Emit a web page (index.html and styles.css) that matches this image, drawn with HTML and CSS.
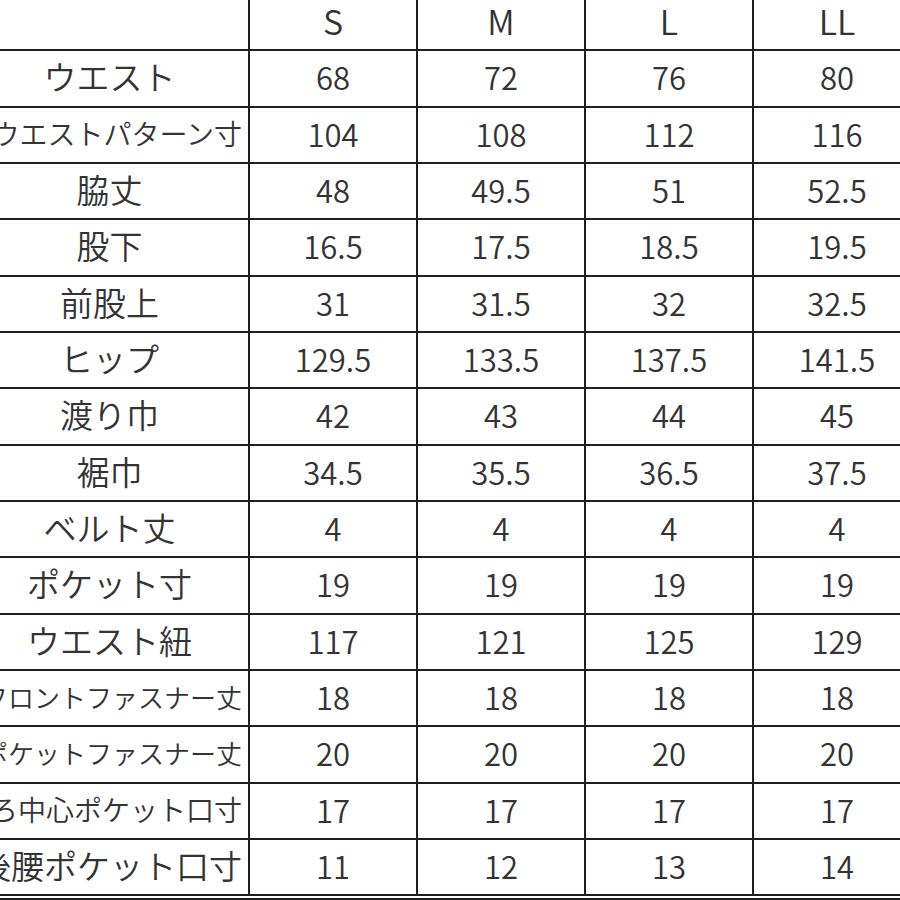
FILE: index.html
```html
<!DOCTYPE html>
<html lang="ja">
<head>
<meta charset="utf-8">
<title>サイズ表</title>
<link rel="stylesheet" href="styles.css">
</head>
<body>
<div class="sheet">
  <div class="grid">
    <div class="cell head"></div>
    <div class="cell head">S</div>
    <div class="cell head">M</div>
    <div class="cell head">L</div>
    <div class="cell head">LL</div>

    <div class="cell label">ウエスト</div>
    <div class="cell num">68</div><div class="cell num">72</div><div class="cell num">76</div><div class="cell num">80</div>

    <div class="cell label fit f28">ウエストパターン寸</div>
    <div class="cell num">104</div><div class="cell num">108</div><div class="cell num">112</div><div class="cell num">116</div>

    <div class="cell label">脇丈</div>
    <div class="cell num">48</div><div class="cell num">49.5</div><div class="cell num">51</div><div class="cell num">52.5</div>

    <div class="cell label">股下</div>
    <div class="cell num">16.5</div><div class="cell num">17.5</div><div class="cell num">18.5</div><div class="cell num">19.5</div>

    <div class="cell label">前股上</div>
    <div class="cell num">31</div><div class="cell num">31.5</div><div class="cell num">32</div><div class="cell num">32.5</div>

    <div class="cell label">ヒップ</div>
    <div class="cell num">129.5</div><div class="cell num">133.5</div><div class="cell num">137.5</div><div class="cell num">141.5</div>

    <div class="cell label">渡り巾</div>
    <div class="cell num">42</div><div class="cell num">43</div><div class="cell num">44</div><div class="cell num">45</div>

    <div class="cell label">裾巾</div>
    <div class="cell num">34.5</div><div class="cell num">35.5</div><div class="cell num">36.5</div><div class="cell num">37.5</div>

    <div class="cell label">ベルト丈</div>
    <div class="cell num">4</div><div class="cell num">4</div><div class="cell num">4</div><div class="cell num">4</div>

    <div class="cell label">ポケット寸</div>
    <div class="cell num">19</div><div class="cell num">19</div><div class="cell num">19</div><div class="cell num">19</div>

    <div class="cell label">ウエスト紐</div>
    <div class="cell num">117</div><div class="cell num">121</div><div class="cell num">125</div><div class="cell num">129</div>

    <div class="cell label fit f26">フロントファスナー丈</div>
    <div class="cell num">18</div><div class="cell num">18</div><div class="cell num">18</div><div class="cell num">18</div>

    <div class="cell label fit f26">ポケットファスナー丈</div>
    <div class="cell num">20</div><div class="cell num">20</div><div class="cell num">20</div><div class="cell num">20</div>

    <div class="cell label fit f28">後ろ中心ポケット口寸</div>
    <div class="cell num">17</div><div class="cell num">17</div><div class="cell num">17</div><div class="cell num">17</div>

    <div class="cell label fit">後腰ポケット口寸</div>
    <div class="cell num">11</div><div class="cell num">12</div><div class="cell num">13</div><div class="cell num">14</div>
  </div>
  <div class="tail"></div>
</div>
</body>
</html>
```

FILE: styles.css
```css
html, body {
  margin: 0;
  padding: 0;
  background: #ffffff;
  overflow: hidden;
}

body {
  width: 900px;
  height: 900px;
  font-family: "Noto Sans CJK JP", "Noto Sans", sans-serif;
  font-weight: 350;
  color: #333333;
}

.sheet {
  margin: 0 0 0 -29px;
  width: 949px;
}

.grid {
  display: grid;
  grid-template-columns: 277px repeat(4, 166px);
  grid-template-rows: 49.33px;
  grid-auto-rows: 54.33px;
  gap: 2px;
  padding-bottom: 2px;
  background: #1e1e1e;
}

.tail {
  margin-top: 2px;
  height: 2px;
  background: #1e1e1e;
}

.cell {
  background: #ffffff;
  display: flex;
  align-items: center;
  justify-content: center;
  white-space: nowrap;
  overflow: hidden;
  line-height: 1;
  padding-bottom: 3px;
  box-sizing: border-box;
}

.head {
  font-size: 34px;
  padding-bottom: 8px;
  overflow: visible;
}

.num {
  font-size: 31px;
}

.label {
  font-size: 33px;
}

.fit {
  justify-content: flex-end;
  padding-right: 6px;
}

.f28 {
  font-size: 28px;
}

.f26 {
  font-size: 26px;
}
```
